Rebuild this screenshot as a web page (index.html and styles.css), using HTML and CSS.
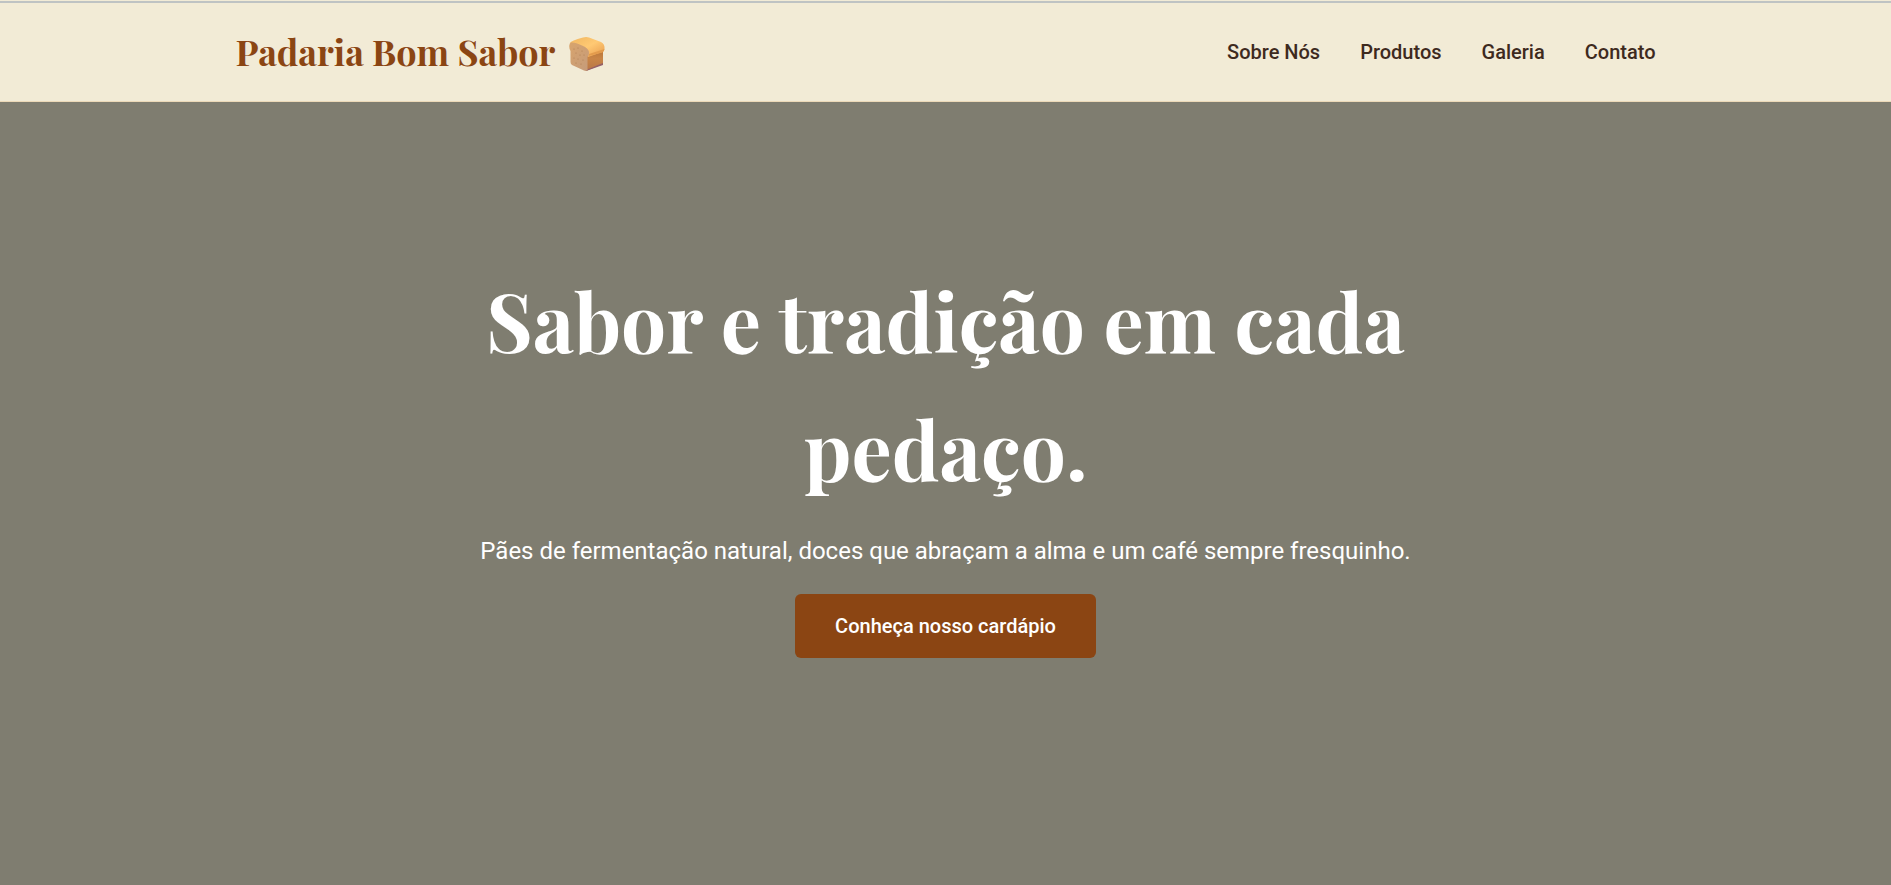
FILE: index.html
```html
<!DOCTYPE html>
<html lang="pt-BR">
<head>
    <meta charset="UTF-8">
    <meta name="viewport" content="width=device-width, initial-scale=1.0">
    <title>Padaria Bom Sabor</title>
    <link rel="stylesheet" href="styles.css">
</head>
<body>
    <header class="header">
        <div class="container">
            <a href="#inicio" class="logo">
                <span>Padaria Bom Sabor</span>
                <svg class="logo-icon" viewBox="0 -6 36 40" aria-hidden="true">
                    <defs>
                        <linearGradient id="crosta" x1="0" y1="0" x2="1" y2="1">
                            <stop offset="0" stop-color="#f0b660"/>
                            <stop offset="0.5" stop-color="#ffc973"/>
                            <stop offset="1" stop-color="#e79a4c"/>
                        </linearGradient>
                        <linearGradient id="lado" x1="0" y1="0" x2="0" y2="1">
                            <stop offset="0" stop-color="#b87538"/>
                            <stop offset="0.4" stop-color="#c98546"/>
                            <stop offset="1" stop-color="#b87648"/>
                        </linearGradient>
                        <linearGradient id="miolo" x1="0" y1="0" x2="1" y2="1">
                            <stop offset="0" stop-color="#d8a46c"/>
                            <stop offset="1" stop-color="#c59b7b"/>
                        </linearGradient>
                    </defs>
                    <path d="M17 18 34 13V27L17 34z" fill="url(#lado)"/>
                    <path d="M17 33 34 26V28L17 34z" fill="#956068"/>
                    <path d="M1 6Q2 4 14 0.600Q17-0.500 20 0.500L32 5Q36 7 35.500 12Q35 15 33.500 15L19 20 18 15Q13 10 2 7z" fill="url(#crosta)"/>
                    <path d="M20 17 35.500 12Q35 15 33.500 15.500L19.500 19z" fill="#e39b4c"/>
                    <path d="M2 5.500Q6 5 13 8.500 20 11 20 16 20 18 18.500 20V33Q17 34.500 15 33.500L3 28Q1.500 27 1.500 25V14Q0 12 0.300 8.500 0.500 6 2 5.500z" fill="url(#miolo)"/>
                    <g fill="#aa7850">
                        <circle cx="5" cy="12" r="0.500"/><circle cx="9" cy="11" r="0.500"/><circle cx="13" cy="14" r="0.500"/>
                        <circle cx="7" cy="16" r="0.500"/><circle cx="11" cy="18" r="0.500"/><circle cx="15" cy="18" r="0.500"/>
                        <circle cx="5" cy="21" r="0.500"/><circle cx="9" cy="22" r="0.500"/><circle cx="14" cy="23" r="0.500"/>
                        <circle cx="7" cy="26" r="0.500"/><circle cx="12" cy="27" r="0.500"/>
                    </g>
                </svg>
            </a>
            <nav class="nav">
                <a href="#sobre">Sobre Nós</a>
                <a href="#produtos">Produtos</a>
                <a href="#galeria">Galeria</a>
                <a href="#contato">Contato</a>
            </nav>
        </div>
    </header>

    <main class="hero" id="inicio">
        <div class="hero-content">
            <h1>Sabor e tradição em cada pedaço.</h1>
            <p>Pães de fermentação natural, doces que abraçam a alma e um café sempre fresquinho.</p>
            <a href="#produtos" class="btn">Conheça nosso cardápio</a>
        </div>
    </main>
</body>
</html>
```
FILE: styles.css
```css
* {
    margin: 0;
    padding: 0;
    box-sizing: border-box;
}

body {
    display: flex;
    flex-direction: column;
    min-height: 100vh;
    padding-top: 1px;
    font-family: "Roboto", sans-serif;
    font-size: 20px;
    line-height: 32px;
    color: #3e2a1e;
    background-color: #f2ebd6;
}

a {
    color: inherit;
    text-decoration: none;
}

.header {
    padding: 20px 0;
    border-top: 2px solid #bfc3c3;
    border-bottom: 1px solid #ecd9b8;
    background-color: #f2ebd6;
}

.container {
    display: flex;
    justify-content: space-between;
    align-items: center;
    width: 90%;
    max-width: 1420px;
    margin: 0 auto;
}

.logo {
    display: flex;
    align-items: center;
    gap: 14px;
    padding-bottom: 2px;
    font-family: "Playfair Display", "Liberation Serif", serif;
    font-size: 36px;
    font-weight: 700;
    line-height: 56px;
    color: #8b4513;
}

.logo-icon {
    width: 36px;
    height: 40px;
}

.nav {
    display: flex;
    gap: 40px;
    font-weight: 500;
}

.nav a:hover {
    color: #8b4513;
}

.hero {
    flex: 1;
    padding: 154px 20px;
    text-align: center;
    color: #fff;
    background-color: #7f7d70;
}

.hero-content {
    max-width: 1000px;
    margin: 0 auto;
}

.hero h1 {
    margin-bottom: 18px;
    font-family: "Playfair Display", "Liberation Serif", serif;
    font-size: 80px;
    font-weight: 700;
    line-height: 128px;
}

.hero p {
    margin-bottom: 22px;
    font-size: 24px;
    line-height: 42px;
}

.btn {
    display: inline-block;
    padding: 16px 40px;
    border-radius: 6px;
    font-weight: 500;
    background-color: #8b4513;
}

.btn:hover {
    background-color: #6f370f;
}
```
